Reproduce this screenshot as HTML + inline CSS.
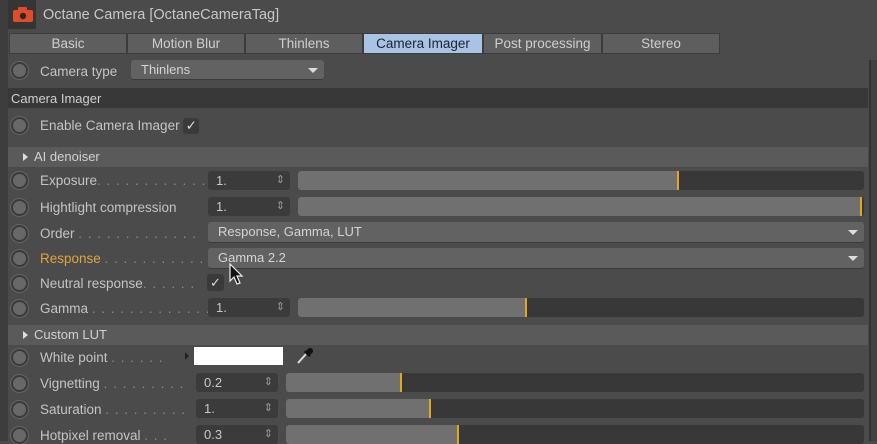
<!DOCTYPE html>
<html><head><meta charset="utf-8"><style>
*{margin:0;padding:0;box-sizing:border-box}
body{width:877px;height:441px;background:#4b4b4b;overflow:hidden;position:relative;font-family:"Liberation Sans",sans-serif;font-size:13px;color:#c4c4c4}
.a{position:absolute}
.tab{position:absolute;top:33px;height:21px;background:#5e5e5e;border:1px solid #3c3c3c;text-align:center;line-height:19px;color:#cfcfcf;font-size:13.5px}
.rad{position:absolute;left:11px;width:17px;height:17px;border-radius:50%;background:#686868;border:2px solid #3a3a3a;box-shadow:0 0 0 1px #666}
.lbl{position:absolute;left:40px;color:#c4c4c4;font-size:13.5px;white-space:nowrap}
.dots{color:#8a8a8a;letter-spacing:1px}
.num{position:absolute;height:19px;background:#3b3b3b;border-radius:3px;color:#c8c8c8;padding-left:8px;line-height:19px}
.num:after{content:"⇕";position:absolute;right:5px;top:0;font-size:11px;color:#999}
.sl{position:absolute;height:19px;background:#383838;border-radius:3px;overflow:hidden}
.sl .f{position:absolute;left:0;top:0;bottom:0;background:#707070;border-right:2px solid #e0a820}
.dd{position:absolute;height:19px;background:#626262;border-radius:3px;color:#d4d4d4;padding-left:10px;line-height:19px;border-bottom:1px solid #3a3a3a}
.dd:after{content:"";position:absolute;right:6px;top:8px;border-left:5px solid transparent;border-right:5px solid transparent;border-top:5px solid #ddd}
.bar{position:absolute;left:8px;width:860px;height:20px;background:#5a5a5a;color:#d0d0d0;line-height:20px;padding-left:14px}
.bar:before{content:"";position:absolute;left:15px;top:6px;border-top:4px solid transparent;border-bottom:4px solid transparent;border-left:5px solid #ddd}
.bar span{margin-left:12px}
</style></head><body>
<div class="a" style="left:0;top:0;width:8px;height:441px;background:#3d3d3d"></div>
<div class="a" style="left:869px;top:60px;width:8px;height:381px;background:#424242;border-left:2px solid #333"></div>
<div class="a" style="left:8px;top:0;width:28px;height:29px;background:#353535"></div>
<svg class="a" style="left:12px;top:7px" width="22" height="16" viewBox="0 0 22 16"><rect x="1" y="3" width="20" height="12" rx="2" fill="#e24a2c"/><rect x="6" y="0" width="9" height="5" rx="1" fill="#e24a2c"/><circle cx="11" cy="9" r="3.2" fill="#2a2a2a"/></svg>
<div class="a" style="left:43px;top:7px;font-size:14.5px;color:#c8c8c8">Octane Camera [OctaneCameraTag]</div>
<div class="tab" style="left:9px;width:118px">Basic</div>
<div class="tab" style="left:127px;width:118px">Motion Blur</div>
<div class="tab" style="left:245px;width:118px">Thinlens</div>
<div class="tab" style="left:363px;width:120px;background:#a8c3e3;color:#1d2330">Camera Imager</div>
<div class="tab" style="left:483px;width:119px">Post processing</div>
<div class="tab" style="left:602px;width:118px">Stereo</div>
<div class="rad" style="top:62px"></div><div class="lbl" style="top:64px">Camera type</div>
<div class="dd" style="left:131px;top:60px;width:193px;height:20px">Thinlens</div>
<div class="a" style="left:8px;top:88px;width:860px;height:20px;background:#383838;color:#cfcfcf;padding-left:3px;line-height:21px">Camera Imager</div>
<div class="rad" style="top:117px"></div><div class="lbl" style="top:118px">Enable Camera Imager <span style="display:inline-block;width:16px;height:16px;background:#3a3a3a;border-radius:3px;text-align:center;line-height:16px;color:#ddd;font-weight:normal">✓</span></div>
<div class="bar" style="top:147px"><span>AI denoiser</span></div>

<div class="rad" style="top:172px"></div><div class="lbl" style="top:173px">Exposure<span class="dots">. . . . . . . . . . . .</span></div>
<div class="num" style="left:208px;top:171px;width:82px">1.</div>
<div class="sl" style="left:298px;top:171px;width:566px"><div class="f" style="width:381px"></div></div>

<div class="rad" style="top:199px"></div><div class="lbl" style="top:200px">Hightlight compression</div>
<div class="num" style="left:208px;top:197px;width:82px">1.</div>
<div class="sl" style="left:298px;top:197px;width:566px"><div class="f" style="width:564px"></div></div>

<div class="rad" style="top:225px"></div><div class="lbl" style="top:226px">Order <span class="dots">. . . . . . . . . . . . .</span></div>
<div class="dd" style="left:208px;top:222px;width:656px;height:21px">Response, Gamma, LUT</div>

<div class="rad" style="top:250px"></div><div class="lbl" style="top:251px;color:#e2a43a">Response <span class="dots">. . . . . . . . . . .</span></div>
<div class="dd" style="left:208px;top:248px;width:656px;height:21px">Gamma 2.2</div>

<div class="rad" style="top:275px"></div><div class="lbl" style="top:276px">Neutral response<span class="dots">. . . . . .</span></div>
<div class="a" style="left:207px;top:274px;width:17px;height:17px;background:#3a3a3a;border-radius:3px;color:#ddd;text-align:center;line-height:17px">✓</div>

<div class="rad" style="top:300px"></div><div class="lbl" style="top:301px">Gamma <span class="dots">. . . . . . . . . . . . .</span></div>
<div class="num" style="left:208px;top:298px;width:82px">1.</div>
<div class="sl" style="left:298px;top:298px;width:566px"><div class="f" style="width:229px"></div></div>

<div class="bar" style="top:325px"><span>Custom LUT</span></div>

<div class="rad" style="top:349px"></div><div class="lbl" style="top:350px">White point <span class="dots">. . . . . .</span></div>
<div class="a" style="left:185px;top:352px;border-top:4px solid transparent;border-bottom:4px solid transparent;border-left:4px solid #222"></div>
<div class="a" style="left:194px;top:347px;width:89px;height:18px;background:#fff"></div>
<svg class="a" style="left:295px;top:346px" width="20" height="20" viewBox="0 0 20 20"><path d="M3 17 L11 8" stroke="#ddd" stroke-width="2"/><path d="M10 5 L15 10" stroke="#111" stroke-width="3"/><circle cx="15" cy="5" r="3" fill="#111"/></svg>

<div class="rad" style="top:375px"></div><div class="lbl" style="top:376px">Vignetting <span class="dots">. . . . . . . . .</span></div>
<div class="num" style="left:196px;top:373px;width:82px">0.2</div>
<div class="sl" style="left:286px;top:373px;width:578px"><div class="f" style="width:116px"></div></div>

<div class="rad" style="top:401px"></div><div class="lbl" style="top:402px">Saturation <span class="dots">. . . . . . . . .</span></div>
<div class="num" style="left:196px;top:399px;width:82px">1.</div>
<div class="sl" style="left:286px;top:399px;width:578px"><div class="f" style="width:145px"></div></div>

<div class="rad" style="top:427px"></div><div class="lbl" style="top:428px">Hotpixel removal <span class="dots">. . .</span></div>
<div class="num" style="left:196px;top:425px;width:82px">0.3</div>
<div class="sl" style="left:286px;top:425px;width:578px"><div class="f" style="width:173px"></div></div>

<svg class="a" style="left:229px;top:263px" width="16" height="24" viewBox="0 0 16 24"><path d="M1 1 L1 18 L5 14 L8 21 L11 20 L8 13 L13 13 Z" fill="#111" stroke="#eee" stroke-width="1.2"/></svg>
</body></html>
